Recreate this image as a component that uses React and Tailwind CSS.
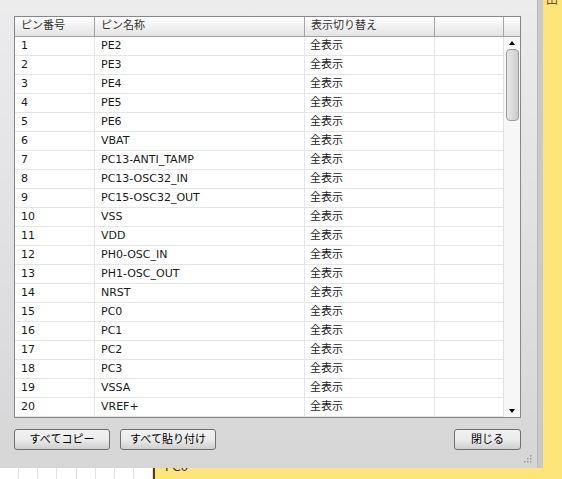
import React from 'react';

const pins = [
  'PE2', 'PE3', 'PE4', 'PE5', 'PE6', 'VBAT', 'PC13-ANTI_TAMP', 'PC13-OSC32_IN',
  'PC15-OSC32_OUT', 'VSS', 'VDD', 'PH0-OSC_IN', 'PH1-OSC_OUT', 'NRST', 'PC0',
  'PC1', 'PC2', 'PC3', 'VSSA', 'VREF+',
];

const font = { fontFamily: '"DejaVu Sans", "Noto Sans CJK JP", sans-serif' };

const Btn = ({ children, className }) => (
  <button
    className={`h-[21px] rounded-[3px] border border-[#707070] bg-gradient-to-b from-[#f2f2f2] via-[#ebebeb] to-[#cfcfcf] text-[11px] text-black leading-none ${className}`}
  >
    {children}
  </button>
);

const Scrollbar = () => (
  <div className="w-[17px] flex flex-col items-center bg-[#f7f7f7] border-l border-[#e0e0e0]">
    <div className="h-[12px] flex items-center justify-center">
      <div className="w-0 h-0 border-l-[3px] border-r-[3px] border-b-[4px] border-l-transparent border-r-transparent border-b-black" />
    </div>
    <div className="w-[13px] h-[72px] rounded-[4px] border border-[#9a9b9b] bg-gradient-to-r from-[#e6e6e6] via-[#dadada] to-[#cdcdcd]" />
    <div className="flex-1" />
    <div className="h-[12px] flex items-center justify-center">
      <div className="w-0 h-0 border-l-[3px] border-r-[3px] border-t-[4px] border-l-transparent border-r-transparent border-t-black" />
    </div>
  </div>
);

const App = () => {
  return (
    <div className="w-[562px] h-[479px] flex bg-[#fde57a] overflow-hidden" style={font}>
      <div className="w-[543px] flex flex-col">
        <div className="h-[468px] flex">
          <div className="relative w-[537px] h-full bg-gradient-to-b from-[#ececec] to-[#d6d6d6] pl-[14px] pt-[16px]">
            <div className="w-[507px] h-[402px] border border-[#828790] bg-white flex flex-col">
              <div className="h-[20px] flex border-b border-[#a0a0a0] bg-gradient-to-b from-white to-[#e3e3e3] text-[11px] text-[#333]">
                <div className="w-[80px] pl-[6px] flex items-center border-r border-[#a5a5a5]">ピン番号</div>
                <div className="w-[210px] pl-[6px] flex items-center border-r border-[#a5a5a5]">ピン名称</div>
                <div className="w-[130px] pl-[6px] flex items-center border-r border-[#a5a5a5]">表示切り替え</div>
                <div className="w-[69px] border-r border-[#a5a5a5]" />
                <div className="flex-1" />
              </div>
              <div className="flex-1 flex overflow-hidden">
                <div className="flex-1 flex flex-col">
                  {pins.map((p, i) => (
                    <div key={p} className="h-[19px] shrink-0 flex border-b border-[#e6e6e6] text-[11px] text-[#1a1a1a]">
                      <div className="w-[80px] pl-[6px] flex items-center border-r border-[#e6e6e6]">{i + 1}</div>
                      <div className="w-[210px] pl-[6px] flex items-center border-r border-[#e6e6e6]">{p}</div>
                      <div className="w-[130px] pl-[5px] flex items-center border-r border-[#e6e6e6]">全表示</div>
                      <div className="flex-1" />
                    </div>
                  ))}
                </div>
                <Scrollbar />
              </div>
            </div>
            <div className="mt-[11px] w-[507px] flex items-center">
              <Btn className="w-[96px]">すべてコピー</Btn>
              <Btn className="w-[96px] ml-[10px]">すべて貼り付け</Btn>
              <div className="flex-1" />
              <Btn className="w-[67px]">閉じる</Btn>
            </div>
            <svg className="absolute right-[5px] bottom-[5px]" width="10" height="10" viewBox="0 0 10 10">
              {[[8, 2], [8, 5], [5, 5], [8, 8], [5, 8], [2, 8]].map(([x, y]) => (
                <rect key={`${x}-${y}`} x={x} y={y} width="1.5" height="1.5" fill="#9a9a9a" />
              ))}
            </svg>
          </div>
          <div className="w-[6px] h-full bg-[#c9c9cc] border-l border-[#b8b8b8]" />
        </div>
        <div className="flex-1 flex overflow-hidden">
          <div className="w-[153px] bg-white flex">
            {[0, 1, 2, 3, 4, 5, 6, 7].map((k) => (
              <div key={k} className="w-[20px] h-full border-r border-[#e0e0e0]" />
            ))}
          </div>
          <div className="w-[2px] bg-[#5a3a1a]" />
          <div className="flex-1 pl-[10px] text-[12px] leading-none -mt-[7px] text-[#333]">PC0</div>
        </div>
      </div>
      <div className="flex-1 pl-[3px] text-[12px] leading-none -mt-[6px] text-[#7a4a1a]">田</div>
    </div>
  );
};

export default App;
